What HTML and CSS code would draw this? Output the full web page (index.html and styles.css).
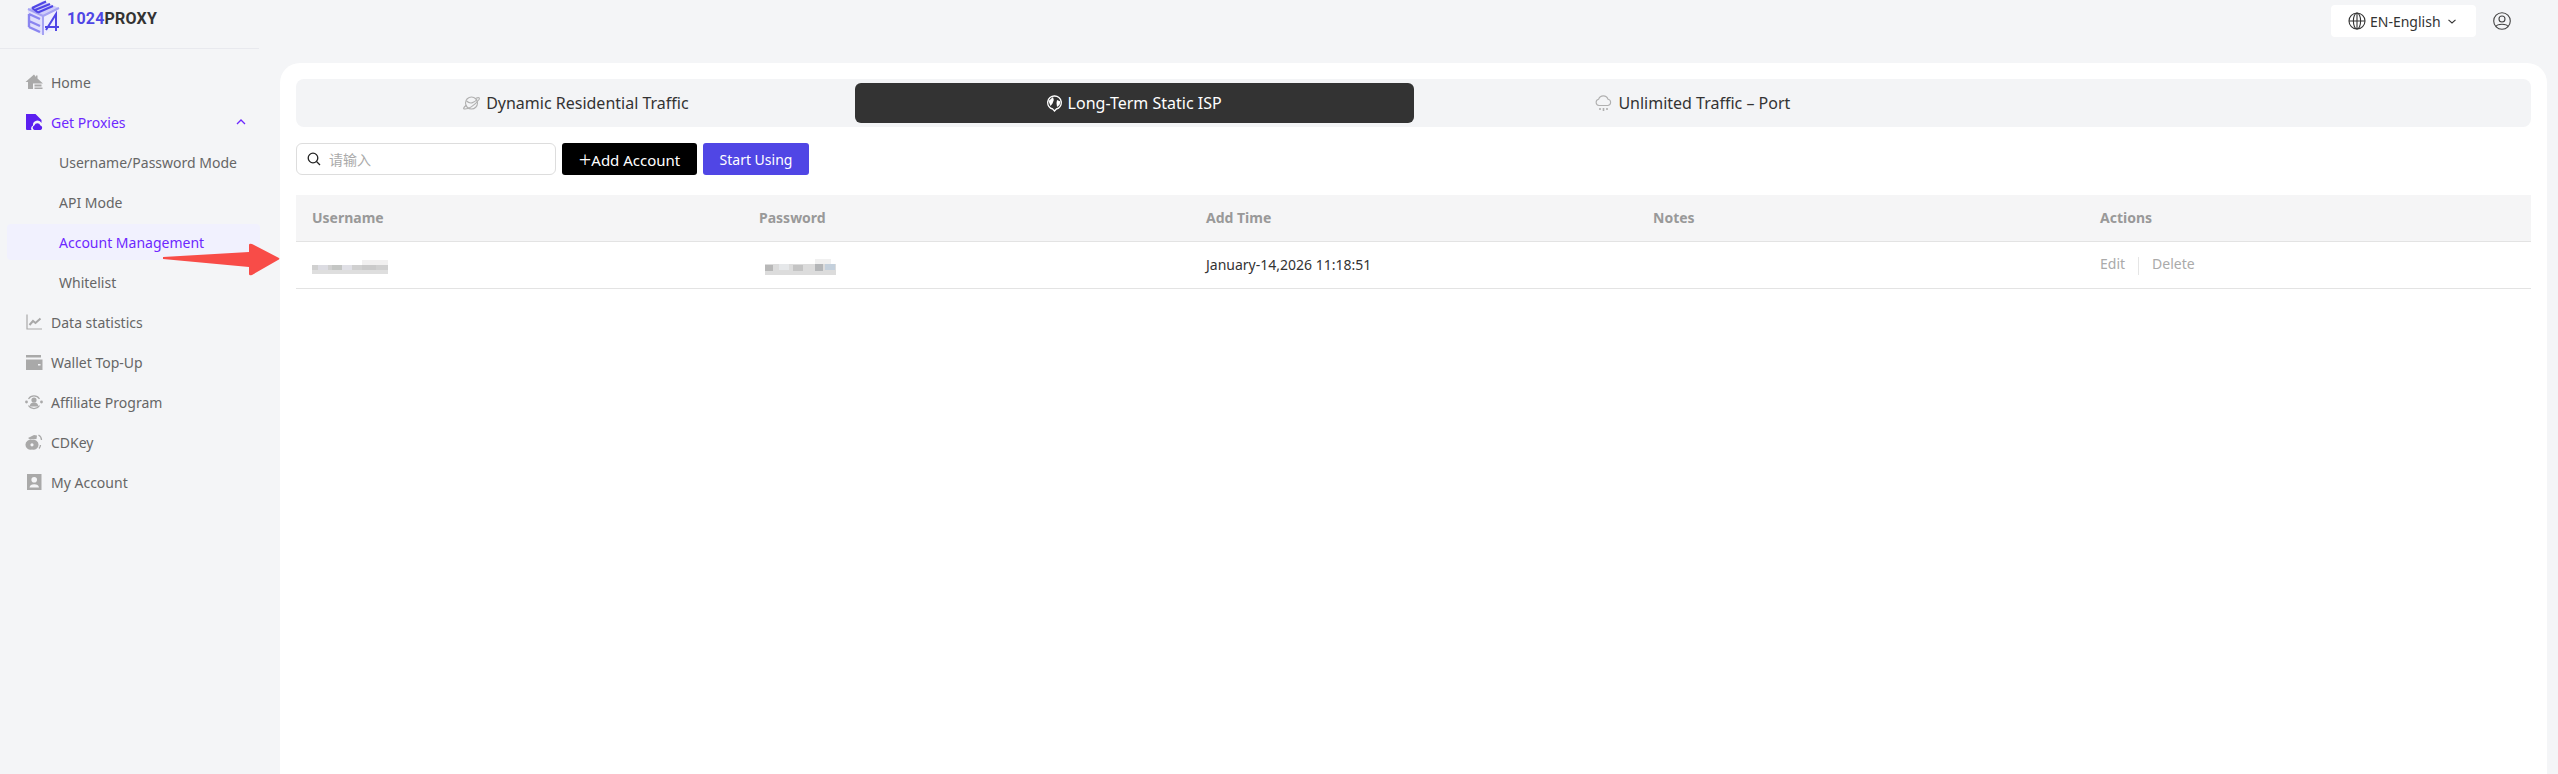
FILE: index.html
```html
<!DOCTYPE html>
<html lang="en">

<head>
    <meta charset="UTF-8">
    <meta name="viewport" content="width=device-width, initial-scale=1.0">
    <title>1024PROXY - Account Management</title>
    <link rel="stylesheet" href="styles.css">
</head>

<body>
    <div class="app">
        <aside class="sidebar">
            <div class="logo">
                <svg class="logo-mark" width="36" height="36" viewBox="0 0 36 36" fill="none">
                    <path d="M18 1 L34 8 L18 16 L3 9 Z" fill="#cfcdf9"/>
                    <path d="M3 9 L18 16 V35 L3 28 Z" fill="#e0dffc"/>
                    <path d="M18 16 L34 8 V27 L18 35 Z" fill="#eeeefe"/>
                    <path d="M3 9 L18 16 V35 M18 16 L34 8" stroke="#a5a2f3" stroke-width="2"/>
                    <path d="M7 8 L21 1.5 M10 10 L25 4 M13 12.5 L28 6 M7 8 L13 12.5" stroke="#4f46e5" stroke-width="2"/>
                    <path d="M4 14 L15 19 M4 21 L15 26 M4 27 L15 32 M4 14 V27" stroke="#8a85f0" stroke-width="2.4"/>
                    <path d="M21 30 L31 14 V31 M20 27 H34" stroke="#4f46e5" stroke-width="2"/>
                </svg>
                <span class="logo-text"><span class="logo-num">1024</span>PROXY</span>
            </div>
            <nav class="nav">
                <a class="nav-item">
                    <svg class="nav-icon" viewBox="0 0 18 18" fill="#a9a9a9"><path d="M9 1.5 L0.5 9 H3 V16 H8 V10.5 H18 L12.5 5.5 V2.5 H11 V4 Z"/><path d="M9.5 11.5 H16.5 V13.5 H9.5 Z M9.5 14.5 H17.5 V16 H9.5 Z"/></svg>
                    Home
                </a>
                <a class="nav-item nav-item-open">
                    <svg class="nav-icon" viewBox="0 0 18 18" fill="#5b1ff0"><path d="M1 1 H10.5 L16.5 7 V10 A4.5 4.5 0 0 0 8 12.5 A3.2 3.2 0 0 0 6.5 17 H2 A1 1 0 0 1 1 16 Z"/><path d="M9.5 17 A2.4 2.4 0 0 1 9.3 12.4 A3.3 3.3 0 0 1 15.4 12.4 A2.4 2.4 0 0 1 15.5 17 Z"/></svg>
                    Get Proxies
                    <svg class="nav-caret" width="10" height="6" viewBox="0 0 10 6" fill="none"><path d="M1 5 L5 1 L9 5" stroke="#6d28ff" stroke-width="1.3"/></svg>
                </a>
                <a class="nav-sub">Username/Password Mode</a>
                <a class="nav-sub">API Mode</a>
                <a class="nav-sub nav-sub-active">Account Management</a>
                <a class="nav-sub">Whitelist</a>
                <a class="nav-item">
                    <svg class="nav-icon" viewBox="0 0 18 18" fill="none" stroke="#a9a9a9"><path d="M2 1.5 V16 H17" stroke-width="1.2"/><path d="M4.5 12 L8 8 L10.5 10 L15.5 5.5" stroke-width="2"/></svg>
                    Data statistics
                </a>
                <a class="nav-item">
                    <svg class="nav-icon" viewBox="0 0 18 18" fill="#a9a9a9"><path d="M1 2 H16 V4.5 H1 Z"/><path d="M1 6.5 H17.5 V17 H1 Z M13 11 V12.5 H15.5 V11 Z" fill-rule="evenodd"/></svg>
                    Wallet Top-Up
                </a>
                <a class="nav-item">
                    <svg class="nav-icon" viewBox="0 0 18 18" fill="#a9a9a9"><circle cx="9" cy="7" r="2.6"/><path d="M4.8 13.5 A4.2 4 0 0 1 13.2 13.5 Z"/><circle cx="1.5" cy="9" r="1.4"/><circle cx="16.5" cy="9" r="1.4"/><path d="M3.5 6 A6.5 6.5 0 0 1 14.5 6 M3.5 12.5 A6.5 6.5 0 0 0 14.5 12.5" fill="none" stroke="#a9a9a9" stroke-width="1.2"/></svg>
                    Affiliate Program
                </a>
                <a class="nav-item">
                    <svg class="nav-icon" viewBox="0 0 18 18" fill="#a9a9a9"><path d="M7 7 A5 5 0 1 1 7 16.5 A5 5 0 1 1 7 7 Z M7 10.2 A1.6 1.6 0 1 0 7 13.4 A1.6 1.6 0 1 0 7 10.2 Z" fill-rule="evenodd"/><path d="M3 5 L9 2 L12 2.5 L11.5 6 L5 6.5 Z"/><path d="M13.5 2 A6 6 0 0 1 16.5 7 M15.5 12 A6 6 0 0 1 14 15.5" fill="none" stroke="#a9a9a9" stroke-width="1.3"/></svg>
                    CDKey
                </a>
                <a class="nav-item">
                    <svg class="nav-icon" viewBox="0 0 18 18" fill="#a9a9a9"><path d="M2 1 H16.5 V17 H2 Z M9.2 4 A2.8 2.8 0 1 0 9.2 9.6 A2.8 2.8 0 1 0 9.2 4 Z M4.5 14.5 H14 A4.8 3.8 0 0 0 4.5 14.5 Z" fill-rule="evenodd"/></svg>
                    My Account
                </a>
            </nav>
        </aside>

        <main class="main">
            <header class="topbar">
                <div class="lang">
                    <svg width="18" height="18" viewBox="0 0 18 18" fill="none" stroke="#333" stroke-width="1.1"><circle cx="9" cy="9" r="8"/><ellipse cx="9" cy="9" rx="3.6" ry="8"/><path d="M1 9 H17 M9 1 V17"/></svg>
                    <span class="lang-text">EN-English</span>
                    <svg width="8" height="5" viewBox="0 0 8 5" fill="none"><path d="M0.5 0.8 L4 4 L7.5 0.8" stroke="#333" stroke-width="1.1"/></svg>
                </div>
                <svg class="user" width="18" height="18" viewBox="0 0 18 18" fill="none" stroke="#444" stroke-width="1.1"><circle cx="9" cy="9" r="8.3"/><circle cx="9" cy="7" r="3"/><path d="M3.2 14.5 C4 11.5 14 11.5 14.8 14.5"/></svg>
            </header>

            <section class="card">
                <div class="tabs">
                    <button class="tab">
                        <svg width="18" height="16" viewBox="0 0 18 16" fill="none" stroke="#b0b0b0" stroke-width="1.1"><circle cx="9.5" cy="8" r="6"/><path d="M4.5 6 C8 9.5 12 8 15 4.5 M4.5 10 C1.5 12.5 0.5 14 3 14 C6 14 12 11.5 17 4.5 C18 3 17 2 14 3.2"/></svg>
                        Dynamic Residential Traffic
                    </button>
                    <button class="tab tab-active">
                        <svg width="15" height="17" viewBox="0 0 15 17" fill="none"><path d="M7.5 1 A6.6 6.6 0 0 1 9.3 14 L7.5 16 L5.7 14 A6.6 6.6 0 0 1 7.5 1 Z" stroke="#fff" stroke-width="1.3"/><path d="M1.5 6 L6 2 L6.8 5 L5.5 8.5 L3.5 11 Z M10 5 L13.5 6.5 L12.5 10 L10 12 L9.5 8 Z" fill="#fff"/></svg>
                        Long-Term Static ISP
                    </button>
                    <button class="tab">
                        <svg width="17" height="17" viewBox="0 0 17 17" fill="none" stroke="#b0b0b0" stroke-width="1.1"><path d="M4 10.5 A3.2 3.2 0 0 1 3.6 4.2 A5 5 0 0 1 13 4.2 A3.2 3.2 0 0 1 13 10.5 Z"/><path d="M5 13 V15 M8.5 13 V16 M12 13 V15" stroke-width="1.6"/></svg>
                        Unlimited Traffic – Port
                    </button>
                </div>

                <div class="toolbar">
                    <label class="search">
                        <svg width="14" height="14" viewBox="0 0 14 14" fill="none" stroke="#222" stroke-width="1.3"><circle cx="6" cy="6" r="4.8"/><path d="M9.5 9.5 L13 13"/></svg>
                        <input type="text" placeholder="请输入">
                    </label>
                    <button class="btn btn-black"><span class="plus">+</span>Add Account</button>
                    <button class="btn btn-purple">Start Using</button>
                </div>

                <table class="accounts">
                    <thead>
                        <tr>
                            <th>Username</th>
                            <th>Password</th>
                            <th>Add Time</th>
                            <th>Notes</th>
                            <th>Actions</th>
                        </tr>
                    </thead>
                    <tbody>
                        <tr>
                            <td>
                                <svg class="blur" width="76" height="15" viewBox="0 0 76 15">
                                    <rect x="50" y="0" width="26" height="5" fill="#f1f0f0"/>
                                    <rect x="0" y="5" width="76" height="9" fill="#d0d0d0"/>
                                    <rect x="6" y="5" width="10" height="5" fill="#dcdce2"/>
                                    <rect x="20" y="5" width="10" height="5" fill="#c4c6c4"/>
                                    <rect x="30" y="5" width="10" height="5" fill="#e0e0e6"/>
                                    <rect x="50" y="5" width="14" height="5" fill="#cacaca"/>
                                    <rect x="0" y="10" width="76" height="4" fill="#dedede"/>
                                </svg>
                            </td>
                            <td>
                                <svg class="blur blur-pass" width="71" height="16" viewBox="0 0 71 16">
                                    <rect x="50" y="0" width="16" height="5" fill="#f0f0f0"/>
                                    <rect x="0" y="5" width="71" height="11" fill="#dcdcdc"/>
                                    <rect x="0" y="6" width="8" height="6" fill="#b8b8b8"/>
                                    <rect x="14" y="5" width="10" height="6" fill="#e6e8ea"/>
                                    <rect x="28" y="6" width="10" height="6" fill="#c4c4c4"/>
                                    <rect x="50" y="5" width="8" height="7" fill="#b4b6b8"/>
                                    <rect x="60" y="5" width="10" height="6" fill="#c4d0dc"/>
                                </svg>
                            </td>
                            <td>January-14,2026 11:18:51</td>
                            <td></td>
                            <td class="actions"><a>Edit</a><span class="sep"></span><a>Delete</a></td>
                        </tr>
                    </tbody>
                </table>
            </section>
        </main>
    </div>

    <svg class="arrow" width="120" height="34" viewBox="0 0 120 34"><path d="M3 14 L89 9 L89 2 Q89 0 92 1 L119 15 Q120 16 118 17 L92 32 Q89 33 89 31 L89 24 L3 16 Z" fill="#f84c48"/></svg>
</body>
</html>
```

FILE: styles.css
```css
* {
    margin: 0;
    padding: 0;
    box-sizing: border-box;
}

html,
body {
    height: 100%;
    overflow: hidden;
}

body {
    position: relative;
    background-color: #f4f5f7;
    font-family: "Noto Sans", "Noto Sans CJK SC", sans-serif;
    font-size: 14px;
    color: #333;
}

.app {
    display: flex;
    height: 100%;
}

/* left menu */
.sidebar {
    width: 280px;
    flex-shrink: 0;
}

.logo {
    display: flex;
    align-items: center;
    gap: 6px;
    width: 259px;
    height: 49px;
    padding: 0 0 12px 25px;
    border-bottom: 1px solid #e8e9ee;
}

.logo-text {
    font-family: "Roboto", sans-serif;
    font-size: 16px;
    font-weight: 700;
    letter-spacing: 0.2px;
    color: #333;
}

.logo-num {
    color: #4f46e5;
}

.nav {
    display: flex;
    flex-direction: column;
    gap: 4px;
    width: 253px;
    margin: 15px 0 0 7px;
}

.nav-item,
.nav-sub {
    display: flex;
    align-items: center;
    height: 36px;
    color: #666;
    border-radius: 4px;
}

.nav-item {
    padding-left: 18px;
}

.nav-icon {
    width: 18px;
    height: 18px;
    margin-right: 8px;
}

.nav-item-open {
    color: #6d28ff;
}

.nav-caret {
    margin-left: auto;
    margin-right: 14px;
}

.nav-sub {
    padding-left: 52px;
}

.nav-sub-active {
    background-color: #f1f1fe;
    color: #6d28ff;
}

/* top right */
.main {
    flex: 1;
    display: flex;
    flex-direction: column;
    min-width: 0;
}

.topbar {
    display: flex;
    justify-content: flex-end;
    align-items: center;
    gap: 17px;
    height: 63px;
    padding: 5px 47px 26px 0;
}

.lang {
    display: flex;
    align-items: center;
    width: 145px;
    height: 32px;
    padding-left: 17px;
    background-color: #fff;
    border-radius: 4px;
    color: #333;
}

.lang-text {
    margin: 0 7px 0 4px;
}

.card {
    flex: 1;
    margin-right: 11px;
    padding: 16px;
    background-color: #fff;
    border-radius: 20px 20px 0 0;
}

/* tabs */
.tabs {
    display: grid;
    grid-template-columns: repeat(4, 1fr);
    height: 48px;
    padding: 4px 0;
    background-color: #f3f4f6;
    border-radius: 8px;
}

.tab {
    display: flex;
    align-items: center;
    justify-content: center;
    gap: 6px;
    border: 0;
    background: none;
    border-radius: 6px;
    font-family: inherit;
    font-size: 16px;
    color: #333;
}

.tab-active {
    background-color: #333;
    color: #fff;
}

/* search and buttons */
.toolbar {
    display: flex;
    gap: 6px;
    margin-top: 16px;
}

.search {
    display: flex;
    align-items: center;
    gap: 8px;
    width: 260px;
    height: 32px;
    padding-left: 10px;
    border: 1px solid #ddd;
    border-radius: 6px;
}

.search input {
    flex: 1;
    min-width: 0;
    border: 0;
    outline: 0;
    font-family: inherit;
    font-size: 14px;
}

.search input::placeholder {
    color: #aaa;
}

.btn {
    height: 32px;
    border: 0;
    border-radius: 3px;
    color: #fff;
    font-family: inherit;
    font-size: 14px;
}

.btn-black {
    width: 135px;
    background-color: #000;
    font-size: 15px;
}

.plus {
    font-size: 22px;
    font-weight: 300;
    line-height: 1;
    vertical-align: -2px;
}

.btn-purple {
    width: 106px;
    background-color: #5046e5;
}

/* table */
.accounts {
    width: 100%;
    margin-top: 20px;
    border-collapse: collapse;
    table-layout: fixed;
}

.accounts th {
    height: 46px;
    padding-left: 16px;
    background-color: #f5f5f6;
    border-bottom: 1px solid #e3e3e3;
    color: #999;
    font-weight: 700;
    font-size: 14px;
    text-align: left;
}

.accounts td {
    height: 47px;
    padding-left: 16px;
    border-bottom: 1px solid #e3e3e3;
    color: #333;
}

.blur {
    display: block;
    margin-top: 5px;
}

.blur-pass {
    margin-left: 6px;
}

.accounts .actions {
    color: #aaa;
}

.sep {
    display: inline-block;
    width: 1px;
    height: 18px;
    margin: 0 13px;
    background-color: #e5e5e5;
    vertical-align: middle;
}

/* the red pointer lies over the menu and the card */
.arrow {
    position: absolute;
    left: 160px;
    top: 243px;
}
```
